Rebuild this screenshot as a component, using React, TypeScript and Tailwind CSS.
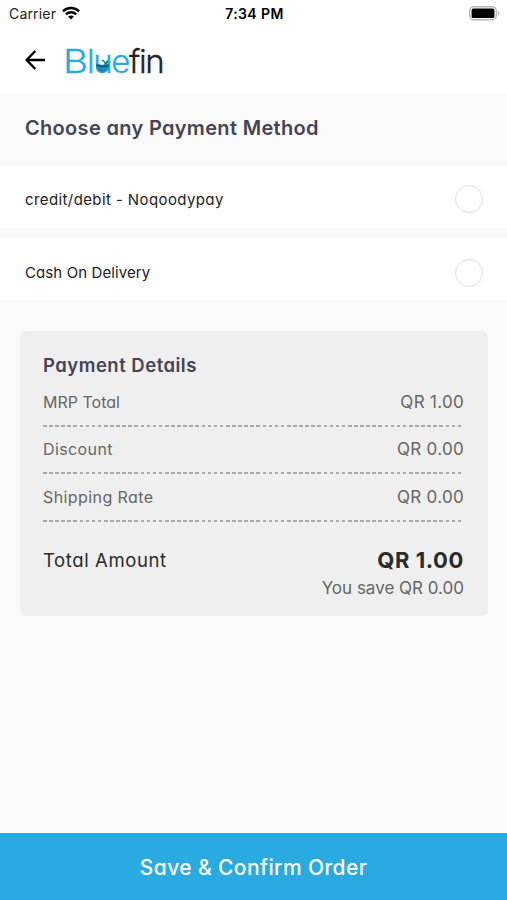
import { useState } from 'react';

const methods = [
  { id: 'card', label: 'credit/debit - Noqoodypay', className: 'pt-[2px] tracking-[0.4px]', rowClassName: 'pt-[4px]' },
  { id: 'cod', label: 'Cash On Delivery', className: 'pt-[1px] tracking-[0.1px]', rowClassName: 'pt-[7px]' },
];

const charges = [
  { label: 'MRP Total', amount: 'QR 1.00', className: 'tracking-[0px]' },
  { label: 'Discount', amount: 'QR 0.00', className: 'tracking-[0.4px]' },
  { label: 'Shipping Rate', amount: 'QR 0.00', className: 'tracking-[0.42px]' },
];

function StatusBar() {
  return (
    <div className="grid h-[27px] grid-cols-3 items-center pl-[9px] pr-[7px] text-black">
      <div className="flex items-center gap-[6px]">
        <span className="text-[14px] leading-none tracking-[0.18px] text-[#222]">Carrier</span>
        <svg className="-mt-[2px]" width="18" height="14" viewBox="0 0 18 14" fill="none" stroke="currentColor" strokeWidth="2.5">
          <path d="M.9 5.3C5.4 .9 12.6 .9 17.1 5.3" />
          <path d="M3.9 8.4C6.8 5.6 11.2 5.6 14.1 8.4" />
          <path d="M6.1 10.6C7.7 9.1 10.3 9.1 11.9 10.6L9 13.6Z" fill="currentColor" stroke="none" />
        </svg>
      </div>
      <span className="text-center text-[14px] font-semibold leading-none tracking-[0.4px]">7:34 PM</span>
      <div className="flex justify-end">
        <svg width="31" height="15" viewBox="0 0 31 15">
          <rect x=".7" y=".7" width="26.6" height="13.1" rx="4" fill="white" stroke="#b5b5b5" strokeWidth="1.4" />
          <rect x="2.6" y="2.6" width="22.8" height="9.3" rx="1.5" fill="black" />
          <path d="M28.8 5v4.6c2.2-1 2.2-3.6 0-4.6Z" fill="#b5b5b5" />
        </svg>
      </div>
    </div>
  );
}

function Logo() {
  return (
    <div className="relative -ml-[2px] flex text-[33px] font-light leading-[40px] tracking-[-1.4px] [-webkit-text-stroke:0.3px]">
      <span className="mr-[4px] inline-block origin-left scale-x-[1.17] text-[#2aa9e0]">B</span>
      <span className="text-[#2aa9e0]">lue</span>
      <span className="text-[#222]">fin</span>
      <svg className="absolute left-[32px] top-[15px]" width="15" height="17" viewBox="0 0 15 17">
        <path d="M1 8.5C4 7 6 9.5 8.5 8.6S12 8 14 8.5C14.2 13.2 11.5 16.2 7.5 16.2S.8 13 1 8.5Z" fill="#168fc8" />
        <path d="M1.5 8.5c3.2 1.4 8 1.6 12.1 0v1.8c-4 1.4-8.6 1.3-12-.3Z" fill="#175270" />
        <path d="M6 4.2C8.5 3 9.7 4.3 10 6.3c1.2-1.8 2.4-1.9 3.6-2.3-.2 3.1-1.8 5.1-4 4.9C9.5 6.8 8.3 4.9 6 4.2Z" fill="#19888e" />
      </svg>
    </div>
  );
}

function DottedLine() {
  return (
    <div className="h-[2px] w-[420px] bg-[repeating-linear-gradient(90deg,#a9a9a9_0px,#a9a9a9_3.6px,transparent_3.6px,transparent_6.1px)]" />
  );
}

export default function App() {
  const [selected, setSelected] = useState<string | null>(null);

  return (
    <div className="flex h-[900px] w-[507px] flex-col overflow-hidden bg-[#fafafa] font-['Inter',sans-serif]">
      <header className="h-[94px] bg-white">
        <StatusBar />
        <div className="flex h-[67px] items-center gap-[19px] pl-[25px]">
          <button aria-label="Go back" className="-mt-[2px]">
            <svg width="21" height="20" viewBox="0 0 21 20" fill="none" stroke="black" strokeWidth="2.4">
              <path d="M20 10H2M10.3 1 1.6 10l8.7 9" />
            </svg>
          </button>
          <Logo />
        </div>
      </header>

      <main className="flex-1 [font-feature-settings:'cv11']">
        <div className="flex h-[72px] items-center pb-[4px] pl-[25px]">
          <h1 className="whitespace-nowrap text-[20px] font-semibold tracking-[0.32px] text-[#454354]">Choose any Payment Method</h1>
        </div>

        <div className="flex flex-col gap-[10px]">
          {methods.map(method => (
            <button
              key={method.id}
              onClick={() => setSelected(method.id)}
              className={`flex h-[62px] w-full items-center justify-between bg-white pl-[25px] pr-[24px] text-left ${method.rowClassName}`}
            >
              <span className={`text-[15px] text-[#222] ${method.className}`}>{method.label}</span>
              <span className="flex size-[28px] items-center justify-center rounded-full border-[1.5px] border-[#dedede]">
                {selected === method.id && <span className="size-3.5 rounded-full bg-[#29abe2]" />}
              </span>
            </button>
          ))}
        </div>

        <section className="ml-[20px] mt-[31px] h-[285px] w-[468px] rounded-[6px] bg-[#efefef] pl-[23px] pr-[24px] pt-[21px]">
          <h2 className="h-[27px] text-[18.5px] font-semibold leading-[26px] tracking-[0.5px] text-[#454354]">Payment Details</h2>
          {charges.map(charge => (
            <div key={charge.label} className="flex h-[47.6px] flex-col justify-between">
              <div className="flex h-[47px] items-center justify-between text-[#666]">
                <span className={`text-[16px] ${charge.className}`}>{charge.label}</span>
                <span className="pt-[1px] text-[17px] tracking-[0.3px] [font-feature-settings:normal]">{charge.amount}</span>
              </div>
              <DottedLine />
            </div>
          ))}
          <div className="mt-[24px] flex h-[30px] items-center justify-between text-[#2b2b2b]">
            <span className="text-[18.5px] tracking-[0.6px]">Total Amount</span>
            <span className="text-[22px] font-bold tracking-[0.6px]">QR 1.00</span>
          </div>
          <p className="text-right text-[17px] leading-[25px] text-[#666] [font-feature-settings:normal]">You save QR 0.00</p>
        </section>
      </main>

      <button className="h-[67px] bg-[#29abe2] pt-[2px] text-[21px] font-medium tracking-[0.4px] text-white [font-feature-settings:'cv11']">Save &amp; Confirm Order</button>
    </div>
  );
}
